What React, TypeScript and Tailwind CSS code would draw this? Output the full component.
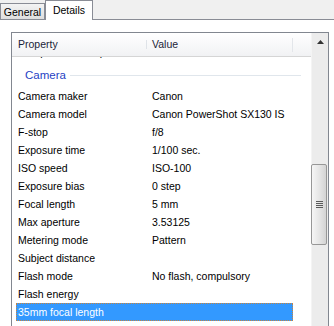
import React from "react";

const rows: [string, string][] = [
  ["Camera maker", "Canon"],
  ["Camera model", "Canon PowerShot SX130 IS"],
  ["F-stop", "f/8"],
  ["Exposure time", "1/100 sec."],
  ["ISO speed", "ISO-100"],
  ["Exposure bias", "0 step"],
  ["Focal length", "5 mm"],
  ["Max aperture", "3.53125"],
  ["Metering mode", "Pattern"],
  ["Subject distance", ""],
  ["Flash mode", "No flash, compulsory"],
  ["Flash energy", ""],
  ["35mm focal length", ""],
];

export default function App() {
  return (
    <div className="w-[334px] h-[326px] overflow-hidden bg-white text-[10.5px] text-black font-['Liberation_Sans',Arial,sans-serif] leading-none">
      {/* Tab strip */}
      <div className="flex h-[20px] items-end bg-[#f0f0f0]">
        <div className="flex h-[17px] w-[45px] items-center justify-center border border-[#898c95] bg-gradient-to-b from-[#f3f3f3] to-[#dedede] pt-[1px]">
          General
        </div>
        <div className="flex h-[20px] w-[48px] items-center justify-center border-x border-t border-[#898c95] bg-white pb-[1px]">
          Details
        </div>
        <div className="h-full flex-1 border-b border-[#898c95]" />
      </div>

      {/* Tab page */}
      <div className="pl-[11px] pt-[12px]">
        <div className="flex h-[300px] w-[318px] border border-[#828790] bg-white">
          {/* List */}
          <div className="flex w-[299px] flex-col">
            {/* Header */}
            <div className="relative z-10 flex h-[24px] shrink-0 items-center border-b border-[#d5d5d5] bg-gradient-to-b from-white to-[#f1f2f4] text-[#1a2438]">
              <div className="w-[134px] pl-[6px]">Property</div>
              <div className="h-[9px] w-px bg-[#dfe3e8]" />
              <div className="w-[145px] pl-[5px]">Value</div>
              <div className="h-[14px] w-px bg-[#e3e6ea]" />
            </div>

            {/* Body */}
            <div className="flex flex-1 flex-col overflow-hidden">
              <div className="-mt-[14px] flex h-[18px] shrink-0 items-center pl-[6px]">
                Compressed bits/pixel
              </div>
              <div className="flex h-[26px] shrink-0 items-center pl-[13px] pt-[3px]">
                <span className="text-[11.5px] text-[#1f3fc4]">Camera</span>
                <div className="ml-[4px] mr-[10px] h-px flex-1 bg-[#e0e6ec]" />
              </div>
              {rows.map(([k, v], i) => {
                const selected = i === rows.length - 1;
                return (
                  <div
                    key={k}
                    className={
                      selected
                        ? "ml-[4px] flex h-[18px] w-[277px] shrink-0 items-center border border-dotted border-[#c9843c] bg-[#3399ff] text-white"
                        : "ml-[4px] flex h-[18px] w-[277px] shrink-0 items-center border border-transparent"
                    }
                  >
                    <div className="w-[135px] pl-[1px]">{k}</div>
                    <div className="flex-1">{v}</div>
                  </div>
                );
              })}
            </div>
          </div>

          {/* Scrollbar */}
          <div className="flex w-[17px] flex-col border-l border-[#f4f4f4] bg-[#ececec]">
            <div className="flex h-[17px] items-center justify-center">
              <svg width="7" height="4" viewBox="0 0 7 4">
                <path d="M3.5 0 L7 4 L0 4 Z" fill="#333" />
              </svg>
            </div>
            <div className="-ml-[1px] mt-[114px] flex h-[81px] w-[16px] flex-col items-center justify-center gap-[1px] rounded-[2px] border border-[#979797] bg-gradient-to-r from-[#f6f6f6] via-[#e6e6e6] to-[#d4d4d4]">
              <div className="h-px w-[7px] bg-[#5a5a5a]" />
              <div className="h-px w-[7px] bg-[#5a5a5a]" />
              <div className="h-px w-[7px] bg-[#5a5a5a]" />
              <div className="h-px w-[7px] bg-[#5a5a5a]" />
            </div>
          </div>
        </div>
      </div>
    </div>
  );
}
